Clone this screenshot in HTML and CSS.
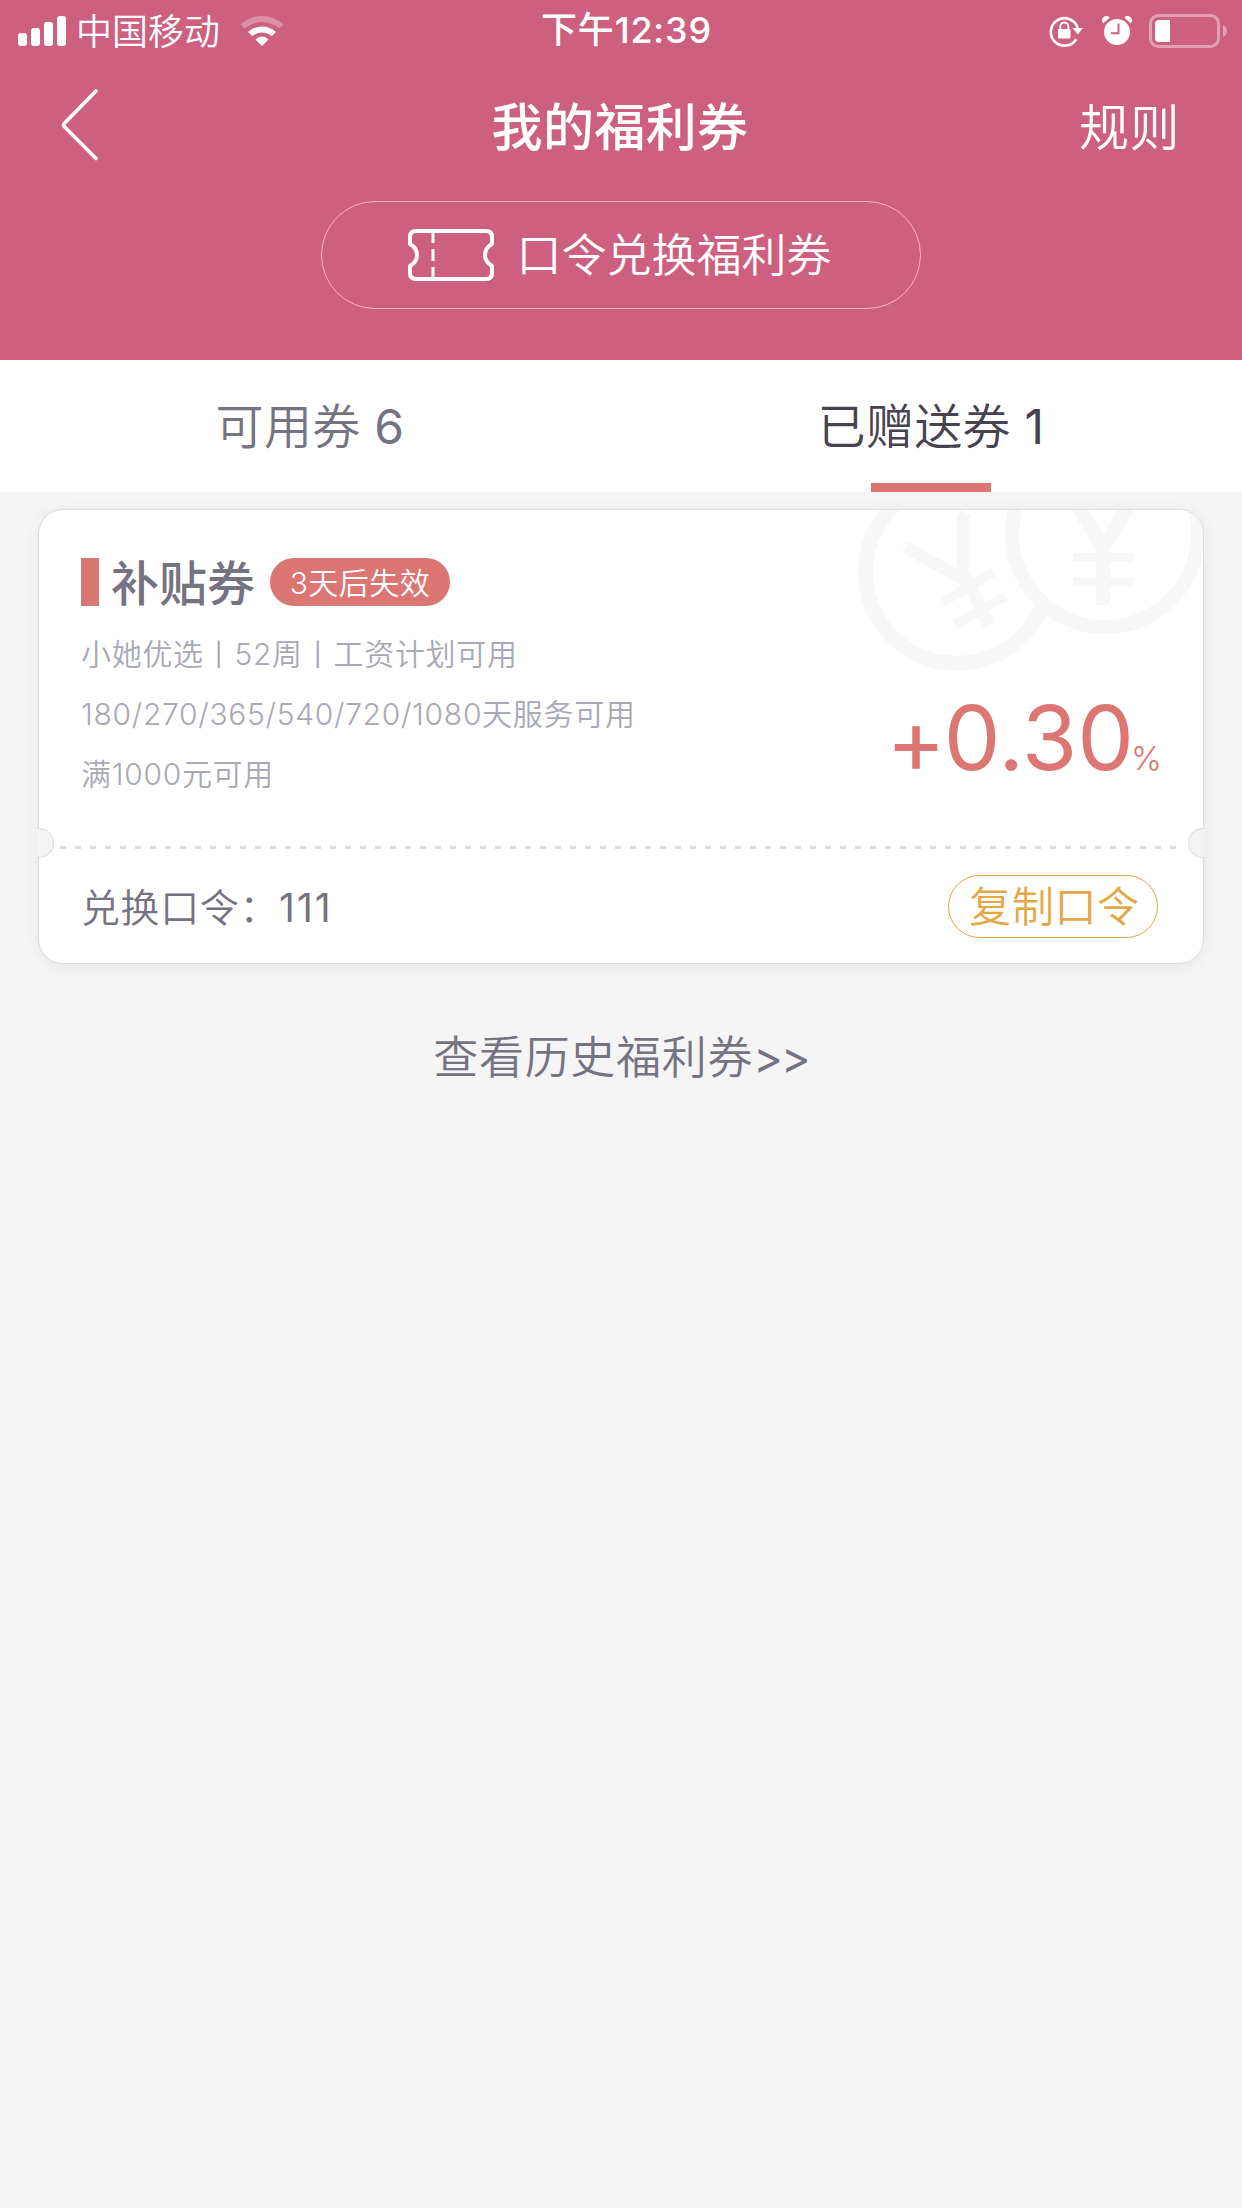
FILE: index.html
```html
<!DOCTYPE html>
<html lang="zh-CN">
<head>
<meta charset="utf-8">
<title>我的福利券</title>
<link rel="stylesheet" href="styles.css">
</head>
<body>
<header class="header">
  <div class="status">
    <div class="status-left">
      <svg class="signal" width="48" height="30" viewBox="0 0 48 30" fill="#fff"><rect x="0" y="17" width="9" height="13" rx="3"/><rect x="13" y="12" width="9" height="18" rx="3"/><rect x="26" y="6" width="9" height="24" rx="3"/><rect x="39" y="0" width="9" height="30" rx="3"/></svg>
      <span class="carrier">中国移动</span>
      <svg class="wifi" width="44" height="30" viewBox="0 0 44 30"><path d="M22 0 Q34 0 43.500 8.500 L39.200 12.600 Q31.500 6 22 6 Q12.500 6 4.800 12.600 L0.500 8.500 Q10 0 22 0 Z" fill="#fff" fill-opacity=".3"/><path d="M22 10.500 Q30 10.500 36 16 L31.700 20.200 Q27.500 16.500 22 16.500 Q16.500 16.500 12.300 20.200 L8 16 Q14 10.500 22 10.500 Z" fill="#fff"/><path d="M22 20.500 Q25.500 20.500 28.500 23.500 L22 30 L15.500 23.500 Q18.500 20.500 22 20.500 Z" fill="#fff"/></svg>
    </div>
    <div class="clock">下午12:39</div>
    <div class="status-right">
      <svg class="lock" width="36" height="32" viewBox="0 0 36 32"><path d="M28.2 24.2 A13.7 13.7 0 1 1 29.700 13" fill="none" stroke="#fff" stroke-width="2.6"/><path d="M24.500 13 H35 L29.800 19.5 Z" fill="#fff"/><rect x="10" y="14" width="12.5" height="9.5" rx="1" fill="#fff"/><path d="M12.3 14.5 V11.5 A4 4 0 0 1 20.3 11.5 V14.5" fill="none" stroke="#fff" stroke-width="1.8"/></svg>
      <svg class="alarm" width="30" height="30" viewBox="0 0 30 30"><circle cx="15" cy="16" r="13" fill="#fff"/><path d="M1.2 7.5 A4.2 4.2 0 0 1 7.8 1.4 Z M28.8 7.5 A4.2 4.2 0 0 0 22.2 1.4 Z" fill="#fff"/><path d="M16.5 7.5 V17.2 H9" fill="none" stroke="#cd607f" stroke-width="2"/></svg>
      <svg class="battery" width="79" height="34" viewBox="0 0 79 34"><rect x="1.5" y="1.5" width="68" height="31" rx="8" fill="none" stroke="#fff" stroke-opacity=".4" stroke-width="3"/><path d="M10 6 H21 V28 H10 A4 4 0 0 1 6 24 V10 A4 4 0 0 1 10 6 Z" fill="#fff"/><path d="M74 11 A6.5 6.5 0 0 1 74 23 Z" fill="#fff" fill-opacity=".4"/></svg>
    </div>
  </div>
  <nav class="nav">
    <svg class="back" width="40" height="74" viewBox="0 0 40 74" fill="none" stroke="#fff" stroke-width="3.6" stroke-linecap="round" stroke-linejoin="round"><path d="M36 3 L4.2 35.5 Q3 37 4.2 38.5 L36 70.5"/></svg>
    <h1 class="title">我的福利券</h1>
    <a class="rules">规则</a>
  </nav>
  <button class="redeem">
    <svg class="ticket" width="86" height="52" viewBox="0 0 86 52" fill="none" stroke="#fff"><path stroke-width="4" stroke-linejoin="round" d="M8 2 H78 Q84 2 84 8 V15 Q77 19 77 26 Q77 33 84 37 V44 Q84 50 78 50 H8 Q2 50 2 44 V37 Q9 33 9 26 Q9 19 2 15 V8 Q2 2 8 2 Z"/><path stroke-width="3" d="M25 3 V14 M25 20 V32 M25 38 V49"/></svg>
    <span class="redeem-text">口令兑换福利券</span>
  </button>
</header>
<div class="tabs">
  <div class="tab"><span>可用券 <span class="num">6</span></span></div>
  <div class="tab tab-active"><span>已赠送券 <span class="num">1</span></span></div>
</div>
<main class="content">
  <section class="card">
    <div class="coins">
      <svg width="350" height="170" viewBox="0 0 350 170" fill="none" stroke="#f7f7f7"><circle cx="104" cy="62" r="91.5" stroke-width="15"/><path stroke-width="12" d="M52 37 L112 70 M109.500 72 V10 L113 3 M112 66 L136 115"/><path stroke-width="9" d="M90 92 L141 62 M102 115 L153 86"/><circle cx="252" cy="24" r="93" fill="#fff" stroke-width="14"/><path stroke-width="14" d="M221 -9 L250 37 L279 -9 M250 31 V95"/><path stroke-width="9" d="M220 47.500 H281 M220 72 H281"/></svg>
    </div>
    <div class="card-main">
      <div class="info">
        <div class="heading"><i class="mark"></i><h2 class="name">补贴券</h2><span class="badge">3天后失效</span></div>
        <p class="desc">小她优选丨52周丨工资计划可用</p>
        <p class="desc">180/270/365/540/720/1080天服务可用</p>
        <p class="desc">满1000元可用</p>
      </div>
      <div class="rate"><span class="rate-value"><span class="plus">+</span>0.30</span><span class="rate-unit">%</span></div>
    </div>
    <div class="divider">
      <i class="notch notch-left"></i>
      <svg class="dashes" width="1118" height="3" viewBox="0 0 1118 3"><path d="M0 1.500 H1118" stroke="#dcdcdc" stroke-width="3" stroke-dasharray="6 9"/></svg>
      <i class="notch notch-right"></i>
    </div>
    <div class="card-foot">
      <span class="code">兑换口令：<span class="code-value">111</span></span>
      <button class="copy">复制口令</button>
    </div>
  </section>
  <a class="history">查看历史福利券<span class="arrows">&gt;&gt;</span></a>
</main>
</body>
</html>
```
FILE: styles.css
```css
* { box-sizing: border-box; margin: 0; padding: 0; }
body {
  width: 1242px;
  min-height: 2208px;
  background: #f5f5f5;
  color: #757380;
  font-family: Inter, "Noto Sans CJK SC", sans-serif;
  font-weight: 350;
  font-feature-settings: "calt" 0;
  white-space: nowrap;
}
svg { display: block; flex: none; }
button { background: none; font: inherit; font-feature-settings: inherit; }

.header {
  display: flex;
  flex-direction: column;
  align-items: center;
  height: 360px;
  background: #cd607f;
  color: #fff;
}
.status {
  display: grid;
  grid-template-columns: 1fr auto 1fr;
  align-items: center;
  width: 100%;
  height: 60px;
  padding: 0 14px 0 18px;
}
.status-left, .status-right { display: flex; align-items: center; height: 60px; }
.status-right { justify-content: flex-end; }
.carrier { margin: 0 20px 0 10px; padding-top: 2px; font-size: 36px; line-height: 58px; }
.clock { margin-left: 7px; font-size: 36px; font-weight: 500; letter-spacing: .8px; line-height: 61px; }
.alarm { margin: 0 17px 0 18px; }

.nav {
  display: grid;
  grid-template-columns: 1fr auto 1fr;
  align-items: center;
  width: 100%;
  height: 130px;
  padding: 0 62px 0 60px;
}
.title { padding-top: 5px; font-size: 51px; font-weight: 500; letter-spacing: .4px; line-height: 80px; }
.rules { justify-self: end; margin-top: -2px; font-size: 50px; letter-spacing: .5px; }

.redeem {
  display: flex;
  align-items: center;
  justify-content: center;
  gap: 22px;
  width: 600px;
  height: 108px;
  margin-top: 11px;
  padding-right: 2px;
  border: 1px solid #ffb3c8;
  border-radius: 54px;
  color: #fff;
}
.redeem-text { margin-top: -5px; font-size: 45px; }

.tabs { display: grid; grid-template-columns: 620px 622px; height: 132px; background: #fff; }
.tab {
  display: flex;
  flex-direction: column;
  align-items: center;
  font-size: 48px;
  letter-spacing: .3px;
  line-height: 134px;
}
.num { font-weight: 400; }
.tab-active { color: #46434f; }
.tab-active::after { content: ""; width: 120px; height: 9px; margin-top: -11px; background: #db7672; }

.content { display: flex; flex-direction: column; align-items: center; padding-top: 17px; }
.card {
  position: relative;
  width: 1166px;
  height: 455px;
  border: 1px solid #dcdcdc;
  border-radius: 25px;
  background: #fff;
  box-shadow: 0 2px 14px rgba(0, 0, 0, .07);
}
.coins { position: absolute; top: 0; right: 0; width: 350px; height: 170px; border-radius: 0 24px 0 0; overflow: hidden; }
.card-main { position: relative; display: flex; justify-content: space-between; height: 318px; padding: 48px 41px 0 42px; }
.heading { display: flex; align-items: center; height: 48px; margin-bottom: 18px; }
.mark { width: 18px; height: 48px; background: #db7672; }
.name { margin: 0 15px 0 12px; padding-top: 3px; font-size: 48px; font-weight: 500; line-height: 48px; }
.badge {
  width: 180px;
  height: 48px;
  border-radius: 24px;
  background: #db7672;
  color: #fff;
  font-size: 30px;
  letter-spacing: .5px;
  line-height: 50px;
  text-align: center;
}
.desc { color: #a9a8b5; font-size: 30px; letter-spacing: .7px; line-height: 60px; }
.rate { display: flex; align-items: baseline; color: #db7672; margin-top: 125px; height: 110px; line-height: 110px; }
.rate-value { font-size: 90px; font-weight: 400; }
.plus { position: relative; top: 3px; left: 2px; }
.rate-unit { margin-left: -3px; font-size: 33px; }

.divider { position: relative; display: flex; align-items: center; justify-content: space-between; height: 30px; margin: 0 -2px; }
.notch { width: 17px; height: 30px; border: 1px solid #dcdcdc; background: #f3f3f3; }
.notch-left { border-left: 0; border-radius: 0 15px 15px 0; }
.notch-right { border-right: 0; border-radius: 15px 0 0 15px; }
.dashes { margin: 8px 10px 0 5px; }
.card-foot { display: flex; align-items: center; justify-content: space-between; height: 96px; padding: 0 45px 0 42px; }
.code { margin-top: -2px; font-size: 39px; letter-spacing: .6px; }
.code-value { font-weight: 400; letter-spacing: 2px; }
.copy {
  width: 210px;
  height: 63px;
  padding-left: 3px;
  border: 1px solid #dfa54a;
  border-radius: 32px;
  color: #e5a745;
  font-size: 42px;
  letter-spacing: .6px;
  line-height: 62px;
}
.history { margin-top: 59px; font-size: 45px; letter-spacing: .7px; line-height: 70px; }
.arrows { font-weight: 400; letter-spacing: -2px; }
```
